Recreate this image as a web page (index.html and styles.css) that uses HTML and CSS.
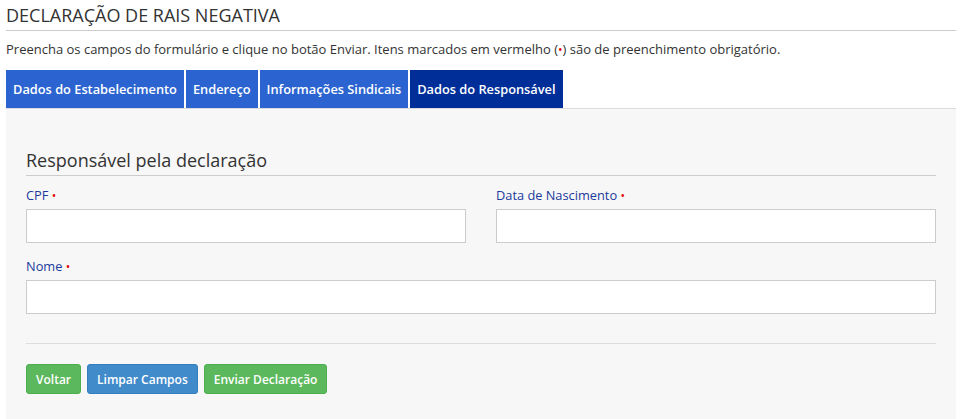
FILE: index.html
```html
<!DOCTYPE html>
<html lang="pt">
<head>
<meta charset="utf-8">
<title>Declaração de RAIS Negativa</title>
<link rel="stylesheet" href="styles.css">
</head>
<body>
<div class="page">
  <h1 class="title">DECLARAÇÃO DE RAIS NEGATIVA</h1>
  <p class="intro">Preencha os campos do formulário e clique no botão Enviar. Itens marcados em vermelho (<span class="req">•</span>) são de preenchimento obrigatório.</p>
  <nav class="tabs">
    <a class="tab">Dados do Estabelecimento</a>
    <a class="tab">Endereço</a>
    <a class="tab">Informações Sindicais</a>
    <a class="tab active">Dados do Responsável</a>
  </nav>
  <section class="panel">
    <h2 class="legend">Responsável pela declaração</h2>
    <div class="row">
      <div class="field">
        <label class="label">CPF <span class="req">•</span></label>
        <input class="input" type="text">
      </div>
      <div class="field">
        <label class="label">Data de Nascimento <span class="req">•</span></label>
        <input class="input" type="text">
      </div>
    </div>
    <div class="row">
      <div class="field">
        <label class="label">Nome <span class="req">•</span></label>
        <input class="input" type="text">
      </div>
    </div>
    <hr class="sep">
    <div class="actions">
      <button class="btn green">Voltar</button>
      <button class="btn blue">Limpar Campos</button>
      <button class="btn green">Enviar Declaração</button>
    </div>
  </section>
</div>
</body>
</html>
```
FILE: styles.css
```css
* { box-sizing: border-box; }
html, body { margin: 0; padding: 0; background: #fff; }
body { font-family: "Open Sans", "Noto Sans", sans-serif; color: #333; }
.page { padding: 0 10px 0 6px; }
.title {
  margin: 0;
  padding: 5px 0 5px 0;
  font-size: 18px;
  font-weight: 400;
  line-height: 20px;
  color: #333;
  border-bottom: 1px solid #cccccc;
}
.intro {
  margin: 0;
  padding: 9px 0 0 0;
  font-size: 13px;
  line-height: 18px;
  color: #333;
}
.req { color: #e00000; font-size: 12px; }
.tabs {
  display: flex;
  gap: 2px;
  margin-top: 11px;
  height: 38px;
}
.tab {
  display: flex;
  align-items: center;
  padding: 0 7px;
  background: #2b64d0;
  color: #fff;
  font-weight: 600;
  font-size: 12.8px;
}
.tab.active { background: #002e99; }
.panel {
  background: #f7f7f7;
  border-top: 1px solid #dcdcdc;
  padding: 36px 20px 40px 20px;
}
.legend {
  margin: 0;
  font-size: 18px;
  font-weight: 400;
  line-height: 30px;
  color: #333;
  border-bottom: 1px solid #ccc;
}
.row { display: flex; gap: 30px; }
.row + .row { margin-top: 4px; }
.field { flex: 1; display: flex; flex-direction: column; }
.label {
  font-size: 12.8px;
  line-height: 17px;
  color: #1a3a9c;
  margin-top: 11px;
  margin-bottom: 5px;
}
.input {
  height: 34px;
  border: 1px solid #ccc;
  background: #fff;
  border-radius: 0;
  outline: none;
}
.sep {
  margin: 29px 0 20px 0;
  border: 0;
  border-top: 1px solid #ddd;
}
.actions { display: flex; gap: 6px; }
.btn {
  font-family: "Open Sans", "Noto Sans", sans-serif;
  font-weight: 600;
  font-size: 12px;
  color: #fff;
  height: 30px;
  padding: 0 9px;
  border-radius: 3px;
  border: 1px solid transparent;
}
.btn.green { background: #5cb85c; border-color: #4cae4c; }
.btn.blue { background: #428bca; border-color: #357ebd; }
```
